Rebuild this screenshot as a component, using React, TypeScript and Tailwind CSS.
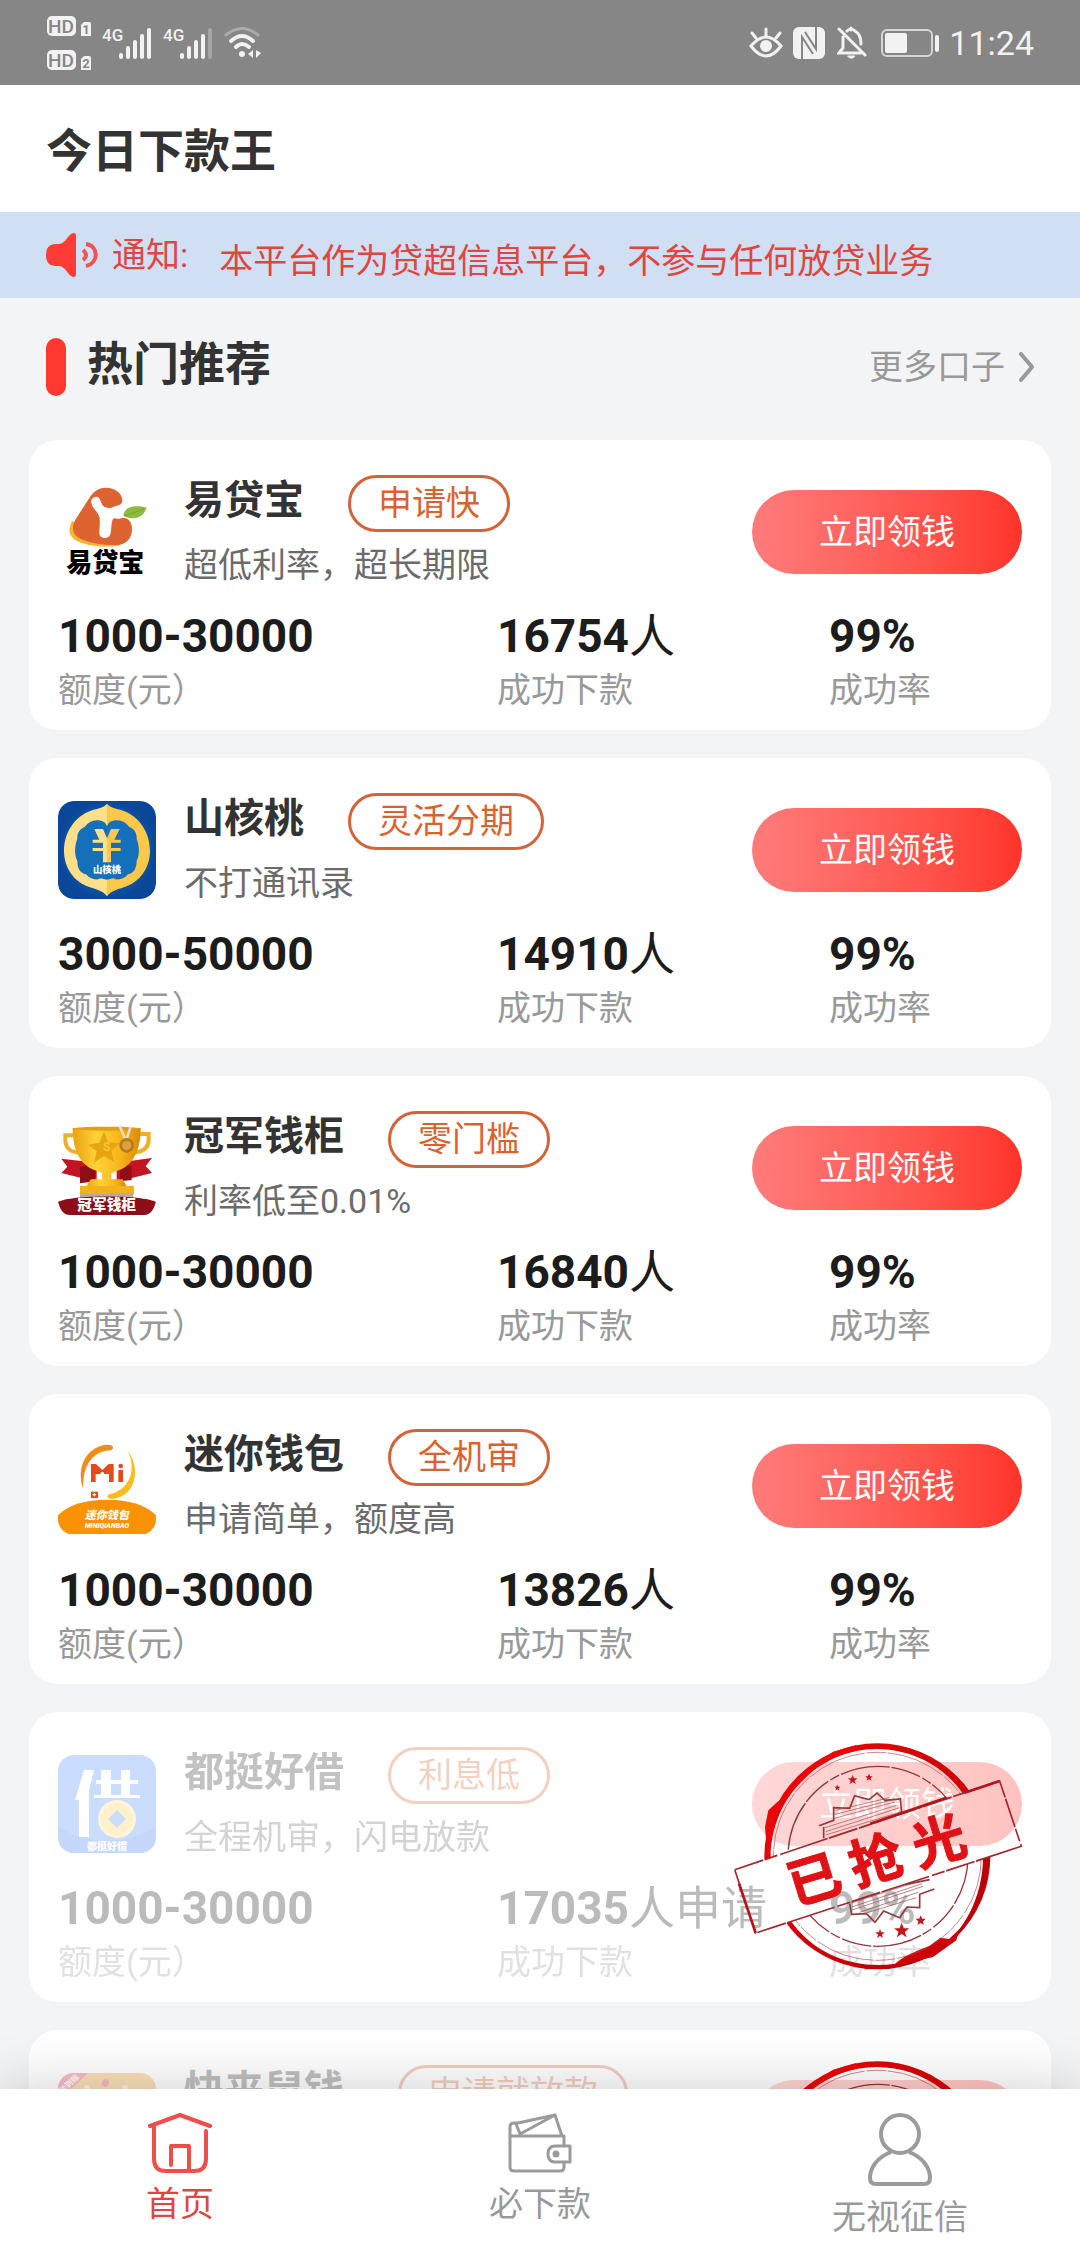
import React from 'react';
import { clsx } from 'clsx';

interface Loan {
  name: string;
  tag: string;
  desc: string;
  amount: string;
  count: string;
  unit: string;
  rate: string;
  Logo: React.FC;
  soldOut?: boolean;
}

const logoClass = 'w-[98px] h-[98px] mt-2 shrink-0 overflow-hidden rounded-2xl';

function YidaibaoLogo() {
  return (
    <svg viewBox="24 24 294 294" className={logoClass}>
      <path d="M66 138C50 170 60 192 92 203C130 214 170 218 205 212L215 200Z" fill="#f5b431" />
      <path
        d="M168 38C195 38 217 55 217 76C217 90 205 92 196 94C184 97 180 104 190 122C196 132 205 134 218 128C236 128 246 142 246 162C246 190 228 210 200 210C165 211 130 206 98 194C68 182 62 160 76 134L120 66C134 46 148 38 168 38Z"
        fill="#dd6330"
      />
      <path
        d="M124 76C128 64 144 62 149 72C155 84 156 93 166 97C185 103 196 92 219 86L221 126C204 134 190 125 187 136C183 150 185 168 180 181C176 192 154 192 149 181C146 168 153 138 147 122C142 110 120 92 124 76Z"
        fill="#fff"
      />
      <path d="M220 123C222 96 250 88 290 98C280 128 252 138 220 123Z" fill="#8dbb3f" />
      <path d="M222 122Q250 115 282 101" stroke="#6f9c2c" strokeWidth="2" fill="none" />
      <text x="166" y="292" textAnchor="middle" fontSize="78" fontWeight="900" fill="#000">
        易贷宝
      </text>
    </svg>
  );
}

function ShanhetaoLogo() {
  return (
    <svg viewBox="54 60 294 294" className={logoClass}>
      <defs>
        <radialGradient id="sht-bg">
          <stop offset="0" stopColor="#1a86d2" />
          <stop offset="1" stopColor="#0a4799" />
        </radialGradient>
      </defs>
      <rect x="54" y="60" width="294" height="294" rx="46" fill="url(#sht-bg)" />
      <path d="M201 68C188 84 166 82 145 92C100 112 72 158 72 210C72 262 104 304 148 318C172 326 190 330 201 346Z" fill="#ffe08a" />
      <path d="M201 68C214 84 236 82 257 92C302 112 330 158 330 210C330 262 298 304 254 318C230 326 212 330 201 346Z" fill="#fbc84a" />
      <path
        d="M201 136C196 122 184 118 172 118C154 118 142 128 134 138C120 142 110 158 112 174C104 194 102 220 112 240C112 262 120 276 138 280C150 294 168 300 182 292L201 296L220 292C234 300 252 294 264 280C282 276 290 262 290 240C300 220 298 194 290 174C292 158 282 142 268 138C260 128 248 118 230 118C218 118 206 122 201 136Z"
        fill="#1470ba"
      />
      <path d="M163 144H189L201 172V244H189V210H158V201H189V185H158V176H178Z" fill="#ffe08a" />
      <path d="M239 144H213L201 172V244H213V210H242V201H213V185H242V176H223Z" fill="#fbc84a" />
      <text x="201" y="277" textAnchor="middle" fontSize="28" fontWeight="900" fill="#fff">
        山核桃
      </text>
    </svg>
  );
}

function GuanjunLogo() {
  return (
    <svg viewBox="54 57 294 294" className={logoClass}>
      <defs>
        <linearGradient id="gold" x1="0" x2="1">
          <stop offset="0" stopColor="#e9a20d" />
          <stop offset=".35" stopColor="#ffd23a" />
          <stop offset=".7" stopColor="#f6b51b" />
          <stop offset="1" stopColor="#d98a06" />
        </linearGradient>
      </defs>
      <path d="M64 176L170 188V245L64 219L82 200Z" fill="#c41424" />
      <path d="M336 174L230 188V245L336 219L317 198Z" fill="#c41424" />
      <path d="M120 200L165 190V244L120 250ZM240 190L275 200V240L240 244Z" fill="#8f0e18" />
      <path d="M104 106H76V120C76 144 92 158 122 158M298 102H326V118C326 142 312 156 280 158" fill="none" stroke="#eeb024" strokeWidth="12" />
      <path d="M98 84H302C302 150 280 198 232 212L214 220V240H186V220L170 212C120 198 98 150 98 84Z" fill="url(#gold)" />
      <ellipse cx="200" cy="86" rx="102" ry="6" fill="#dfa015" />
      <path d="M192 94L204 126L240 130L214 152L222 186L192 168L162 188L170 154L144 134L178 128Z" fill="#e8a512" />
      <text x="200" y="152" textAnchor="middle" fontSize="36" fontWeight="700" fill="#f9c933">S</text>
      <path d="M240 80L258 122L272 80" fill="none" stroke="#e9ddc4" strokeWidth="8" />
      <circle cx="260" cy="136" r="22" fill="#b77a1d" />
      <circle cx="260" cy="136" r="14" fill="#dba13b" />
      <path d="M152 238H248L262 262H138Z" fill="url(#gold)" />
      <rect x="120" y="258" width="162" height="24" fill="#f2b21c" />
      <rect x="120" y="280" width="160" height="14" fill="#b9a9a0" />
      <path d="M54 306C90 284 310 284 348 306C340 330 332 345 312 345H90C70 345 62 332 54 306Z" fill="#8e0d19" />
      <text x="200" y="331" textAnchor="middle" fontSize="44" fontWeight="900" fill="#fff">
        冠军钱柜
      </text>
    </svg>
  );
}

function MiniLogo() {
  return (
    <svg viewBox="54 51 294 294" className={logoClass}>
      <path d="M130 206C112 160 124 96 184 77C196 73 219 72 219 83C219 93 206 90 194 93C146 106 128 150 130 206Z" fill="#f08c1a" />
      <path d="M264 92C304 148 286 226 222 236C206 238 200 234 204 226C207 220 218 222 228 216C276 194 286 142 264 92Z" fill="#f8bd1c" />
      <path d="M153 186V132H168L187 150L206 132H221V186H207V162H167V186Z" fill="#e34a1f" />
      <circle cx="187" cy="160" r="5" fill="#fff" />
      <rect x="235" y="150" width="14" height="36" fill="#e34a1f" />
      <circle cx="242" cy="138" r="7" fill="#e34a1f" />
      <rect x="153" y="215" width="21" height="19" fill="#e34a1f" />
      <path d="M163 219V229M158 224H168" stroke="#fff" strokeWidth="4" />
      <path d="M54 286C84 254 136 239 201 239C266 239 318 254 348 286V310C348 330 336 342 316 342H86C66 342 54 330 54 310Z" fill="#fb9206" />
      <text x="200" y="296" textAnchor="middle" fontSize="33" fontWeight="900" fontStyle="italic" fill="#fff">
        迷你钱包
      </text>
      <text x="201" y="323" textAnchor="middle" fontSize="21" fontWeight="900" fontStyle="italic" fill="#fff">
        MINIQIANBAO
      </text>
    </svg>
  );
}

function DoutingLogo() {
  return (
    <svg viewBox="0 0 98 98" className={logoClass}>
      <rect width="98" height="98" fill="#4d8bff" />
      <path d="M0 72Q49 100 98 72V98H0Z" fill="#3f7df5" />
      <path d="M26 15H36L31 35V82H21V45H17Z" fill="#fff" />
      <path d="M43 15H53V25H63V15H72V25H80V29H72V40H82V43H36V40H43V29H38V25H43ZM53 29V40H63V29Z" fill="#fff" fillRule="evenodd" />
      <circle cx="59" cy="64" r="19" fill="#ffdf80" />
      <circle cx="59" cy="64" r="16" fill="#ffcf55" />
      <path d="M59 55L68 64L59 73L50 64Z" fill="#4d8bff" />
      <text x="49" y="95" textAnchor="middle" fontSize="10" fontWeight="900" fill="#fff">
        都挺好借
      </text>
    </svg>
  );
}

function KuailaiLogo() {
  return (
    <svg viewBox="0 0 98 98" className={logoClass}>
      <rect width="98" height="98" fill="#f59a1c" />
      <path d="M0 0H30L0 28Z" fill="#e8243c" />
      <text x="13" y="13" textAnchor="middle" fontSize="8" fontWeight="700" fill="#fff" transform="rotate(-43 13 13)">
        秒到账
      </text>
      <path d="M44 8C47 5 52 6 51 10C51 14 46 15 44 12Z" fill="#d8232a" />
      <circle cx="29" cy="15" r="3" fill="#ffd9a0" />
      <circle cx="67" cy="15" r="3" fill="#ffd9a0" />
      <circle cx="49" cy="56" r="34" fill="#ffd9a0" />
    </svg>
  );
}

const loans: Loan[] = [
  { name: '易贷宝', tag: '申请快', desc: '超低利率，超长期限', amount: '1000-30000', count: '16754', unit: '人', rate: '99%', Logo: YidaibaoLogo },
  { name: '山核桃', tag: '灵活分期', desc: '不打通讯录', amount: '3000-50000', count: '14910', unit: '人', rate: '99%', Logo: ShanhetaoLogo },
  { name: '冠军钱柜', tag: '零门槛', desc: '利率低至0.01%', amount: '1000-30000', count: '16840', unit: '人', rate: '99%', Logo: GuanjunLogo },
  { name: '迷你钱包', tag: '全机审', desc: '申请简单，额度高', amount: '1000-30000', count: '13826', unit: '人', rate: '99%', Logo: MiniLogo },
  { name: '都挺好借', tag: '利息低', desc: '全程机审，闪电放款', amount: '1000-30000', count: '17035', unit: '人申请', rate: '99%', Logo: DoutingLogo, soldOut: true },
  { name: '快来鼠钱\u00a0', tag: '申请就放款', desc: '秒到账', amount: '1000-30000', count: '15208', unit: '人申请', rate: '99%', Logo: KuailaiLogo, soldOut: true },
];

function HdBadge({ sim }: { sim: string }) {
  return (
    <svg width="46" height="22" viewBox="0 0 46 22">
      <rect x="0" y="1" width="29" height="20" rx="5" fill="#f2f2f2" />
      <text x="14" y="18" textAnchor="middle" fontSize="19" fontWeight="500" fill="#868686">HD</text>
      <path d="M34 10L37 7H42Q44 7 44 9V21H34Z" fill="#f2f2f2" />
      <text x="39" y="19" textAnchor="middle" fontSize="13" fontWeight="700" fill="#868686">{sim}</text>
    </svg>
  );
}

function Signal({ weak }: { weak?: boolean }) {
  return (
    <svg width="52" height="34" viewBox="0 0 52 34" fill="#f2f2f2">
      <text x="0" y="15" fontSize="17" fontWeight="500">4G</text>
      <rect x="17" y="27" width="4" height="6" rx="2" />
      <rect x="24" y="20" width="4" height="13" rx="2" />
      <rect x="31" y="14" width="4" height="19" rx="2" />
      <rect x="38" y="8" width="4" height="25" rx="2" />
      <rect x="45" y="2" width="4" height="31" rx="2" opacity={weak ? 0.3 : 1} />
    </svg>
  );
}

function StatusBar() {
  return (
    <div className="flex h-[85px] shrink-0 items-center justify-between bg-[#868686] pr-[46px] pl-[47px] text-[#f2f2f2]">
      <div className="flex items-center">
        <div className="flex flex-col gap-3">
          <HdBadge sim="1" />
          <HdBadge sim="2" />
        </div>
        <div className="flex gap-[9px] pl-[9px]">
          <Signal />
          <Signal weak />
          <svg width="38" height="34" viewBox="0 0 38 34" fill="none" stroke="#f2f2f2" strokeWidth="3" strokeLinecap="round">
            <path d="M2 9Q18 -4 34 9" opacity=".35" />
            <path d="M7 15Q18 5 29 15" strokeWidth="4" />
            <path d="M12 21Q18 15 25 21" strokeWidth="4" />
            <circle cx="18" cy="28" r="3" fill="#f2f2f2" stroke="none" />
            <path d="M29 24V32L24 28ZM32 24V32L37 27Z" fill="#f2f2f2" stroke="none" />
          </svg>
        </div>
      </div>
      <div className="flex items-center">
        <svg width="34" height="34" viewBox="0 0 34 34" fill="none" stroke="#f2f2f2" strokeWidth="3" strokeLinecap="round">
          <path d="M2 20Q17 2 32 20Q17 40 2 20Z" />
          <circle cx="17" cy="20" r="6" fill="#f2f2f2" stroke="none" />
          <path d="M17 3V10M3 7L7 12M31 7L27 12" />
        </svg>
        <svg width="32" height="34" viewBox="0 0 32 34" className="ml-[10px]">
          <rect x="0" y="1" width="32" height="32" rx="6" fill="#f2f2f2" />
          <path d="M9 34V11L20 28M23 0V23L12 6" fill="none" stroke="#868686" strokeWidth="2" />
        </svg>
        <svg width="30" height="34" viewBox="0 0 30 34" className="ml-3" fill="none" stroke="#f2f2f2" strokeWidth="3" strokeLinecap="round">
          <path d="M6 11V22L2 27H24M10 5Q14 1 18 5Q24 8 24 18M14 2V4M2 3L28 29" />
          <path d="M11 30H18L16 32H13Z" fill="#f2f2f2" strokeWidth="1" />
        </svg>
        <svg width="58" height="30" viewBox="0 0 58 30" className="ml-[14px]">
          <rect x="1" y="2" width="50" height="26" rx="5" fill="none" stroke="#d5d5d5" strokeWidth="2" />
          <rect x="4" y="5" width="22" height="20" rx="2" fill="#f2f2f2" />
          <rect x="54" y="7" width="4" height="17" rx="2" fill="#f2f2f2" />
        </svg>
        <span className="ml-[10px] text-[34px] leading-[48px]">11:24</span>
      </div>
    </div>
  );
}

const star = 'M0 -14L4 -4L14 -4L6 3L9 13L0 7L-9 13L-6 3L-14 -4L-4 -4Z';

function SoldOutStamp() {
  return (
    <svg viewBox="100 95 870 690" className="absolute top-[30px] right-[28px] h-[230px] w-[290px]">
      <defs>
        <clipPath id="stamp-halves">
          <path d="M0 0H1100V145L0 513ZM0 723L1100 364V900H0Z" />
        </clipPath>
        <linearGradient id="stamp-red" x1="0" y1="0" x2="1" y2="1">
          <stop offset="0" stopColor="#f00505" />
          <stop offset="1" stopColor="#b00008" />
        </linearGradient>
      </defs>
      <g clipPath="url(#stamp-halves)" fill="none">
        <path
          d="M533 99A339 339 0 0 1 872 438A339 339 0 0 1 533 777A339 339 0 0 1 194 438A339 339 0 0 1 533 99ZM530 116C360 116 214 260 213 440C214 620 350 764 535 764C600 764 660 748 705 722C790 676 850 560 850 440C850 260 710 116 530 116Z"
          fill="url(#stamp-red)"
          fillRule="evenodd"
        />
        <path d="M196 440L200 400L196 350L206 300L232 276L250 262L240 295L224 330L214 400L208 440Z" fill="#e80808" />
        <path d="M262 250L330 170L400 124L470 104L472 120L404 140L340 178L276 244Z" fill="#ee0505" />
        <path d="M580 768C600 742 640 726 690 706L722 682L748 686L780 655L770 690L700 740Z" fill="url(#stamp-red)" />
        <circle cx="533" cy="438" r="312" stroke="#b6484c" strokeWidth="2" strokeDasharray="180 6 60 4" />
        <circle cx="535" cy="438" r="270" stroke="#96353a" strokeWidth="4" strokeDasharray="150 5 90 8 30 6" />
        <path
          d="M358 346L402 330V292L450 294L465 256L508 268L532 248L556 270L602 266L606 306M372 384V350M450 580L456 612L500 610L526 636L552 602L600 622L622 590L660 592V552L704 536M620 522L690 508"
          stroke="#8e3a3f"
          strokeWidth="5"
        />
        <path
          d="M376 352L590 285M378 364L600 292M378 374L604 304M400 325L585 275M406 312L580 268M408 300L570 262M454 600L670 528M456 590L668 520M480 606L655 546M500 608L650 562M455 578L650 515"
          stroke="#a0484d"
          strokeWidth="2"
        />
      </g>
      <path d="M105 478L900 212L965 408L168 668Z" fill="none" stroke="#a5262c" strokeWidth="5" strokeDasharray="90 5 40 9 150 4" />
      <path d="M795 247L900 212M118 520L168 668M512 340L740 262" stroke="#b5141b" strokeWidth="8" />
      <g fill="#c4161c">
        <path d={star} transform="translate(413 232) scale(.7)" />
        <path d={star} transform="translate(459 208)" />
        <path d={star} transform="translate(508 201) scale(.8)" />
        <path d={star} transform="translate(541 670)" />
        <path d={star} transform="translate(606 660) scale(1.6)" />
        <path d={star} transform="translate(663 630) scale(1.1)" />
      </g>
      <text
        x="334 528 726"
        y="508"
        textAnchor="middle"
        fontSize="160"
        fontWeight="700"
        fill="#e01216"
        stroke="#e01216"
        strokeWidth="3"
        transform="rotate(-17 528 448)"
      >
        已抢光
      </text>
    </svg>
  );
}

function Stat({ value, unit, label }: { value: string; unit?: string; label: string }) {
  return (
    <div className="whitespace-nowrap">
      <p className="text-[46px] leading-[56px] text-[#1c1c1c]">
        <b>{value}</b>
        {unit}
      </p>
      <p className="text-[34px] leading-[52px] text-[#999]">{label}</p>
    </div>
  );
}

function LoanCard({ loan }: { loan: Loan }) {
  const { Logo } = loan;
  return (
    <li className="relative rounded-[28px] bg-white px-[29px] pt-[35px] pb-[14px]">
      <div className={clsx(loan.soldOut && 'opacity-30')}>
        <div className="flex items-start">
          <Logo />
          <div className="ml-7 flex-1">
            <div className="flex items-start gap-[44px]">
              <h3 className="text-[40px] leading-[52px] font-bold text-[#333]">{loan.name}</h3>
              <span className="rounded-full border-3 border-[#d3643a] px-[27px] text-[34px] leading-[51px] text-[#d9632f]">
                {loan.tag}
              </span>
            </div>
            <p className="mt-[9px] text-[34px] leading-[48px] text-[#6b6b6b]">{loan.desc}</p>
          </div>
          <button
            type="button"
            className="mt-[15px] h-[84px] w-[270px] shrink-0 rounded-full bg-linear-to-r from-[#ff7b7b] to-[#ff3329] text-[34px] leading-[48px] text-white"
          >
            立即领钱
          </button>
        </div>
        <div className="mt-[19px] grid grid-cols-[439fr_332fr_193fr]">
          <Stat value={loan.amount} label="额度(元）" />
          <Stat value={loan.count} unit={loan.unit} label="成功下款" />
          <Stat value={loan.rate} label="成功率" />
        </div>
      </div>
      {loan.soldOut && <SoldOutStamp />}
    </li>
  );
}

function TabBar() {
  return (
    <nav className="relative z-10 grid h-[155px] shrink-0 grid-cols-3 bg-white pt-6 text-[34px] leading-[48px] text-[#999] shadow-[0_0_60px_rgba(0,0,0,0.2)]">
      <a href="#home" className="flex flex-col items-center gap-[7px] text-[#e0453f]">
        <svg width="64" height="60" viewBox="0 0 64 60" fill="none" stroke="#ef4f4b" strokeWidth="4" strokeLinecap="round" strokeLinejoin="round">
          <path d="M2 13L32 2L62 13M6 14V46Q6 58 18 58H46Q58 58 58 46V18M23 52V33H41V57" />
        </svg>
        首页
      </a>
      <a href="#loans" className="flex flex-col items-center gap-[7px]">
        <svg width="64" height="60" viewBox="0 0 64 60" fill="none" stroke="#9b9b9b" strokeWidth="3" strokeLinejoin="round">
          <path d="M56 32V23H2V54Q2 58 6 58H52Q56 58 56 54V50M2 23V14Q2 10 6 10H10L47 2L54 23M8 11L13 23M12 21L47 2" />
          <path d="M62 33H47Q40 33 40 41Q40 49 47 49H62Z" />
          <circle cx="48" cy="41" r="2" fill="#9b9b9b" />
        </svg>
        必下款
      </a>
      <a href="#credit" className="flex flex-col items-center gap-[7px]">
        <svg width="64" height="73" viewBox="0 0 64 73" fill="none" stroke="#9b9b9b" strokeWidth="4" strokeLinejoin="round">
          <circle cx="32" cy="21" r="19" />
          <path d="M23 39C10 44 2 54 2 65Q2 71 8 71H56Q62 71 62 65C62 54 54 44 41 39" />
        </svg>
        无视征信
      </a>
    </nav>
  );
}

export default function App() {
  return (
    <div className="flex h-screen flex-col bg-[#f3f4f6] font-[Roboto,'Noto_Sans_CJK_SC',sans-serif]" lang="zh-CN">
      <StatusBar />
      <header className="flex h-[127px] shrink-0 items-center bg-white px-[46px] pt-1">
        <h1 className="text-[46px] leading-[56px] font-bold text-[#333]">今日下款王</h1>
      </header>

      <div className="flex h-[86px] shrink-0 items-center bg-[#d0dff4] px-[46px] text-[34px] leading-[48px] whitespace-nowrap text-[#e0453f]">
        <svg width="52" height="44" viewBox="0 0 52 44">
          <path d="M10 11H13C20 11 22 0 28 0Q30 0 30 3V41Q30 44 28 44C22 44 20 33 13 33H10Q0 33 0 22Q0 11 10 11Z" fill="#ff3b35" />
          <path d="M37 17Q43 22 37 27M40 11C53 13 53 30 40 33" fill="none" stroke="#f25252" strokeWidth="4" />
        </svg>
        <span className="ml-[14px]">通知:</span>
        <p className="ml-[31px] pt-3">本平台作为贷超信息平台，不参与任何放贷业务</p>
      </div>

      <main className="min-h-0 flex-1 overflow-y-auto px-[29px] [scrollbar-width:none]">
        <div className="mt-[40px] mb-[44px] flex h-[58px] items-center pr-4 pl-[17px]">
          <span className="h-[58px] w-5 rounded-full bg-[#ff3830]" />
          <h2 className="ml-[21px] self-start text-[46px] leading-[52px] font-bold text-[#333]">热门推荐</h2>
          <a href="#more" className="ml-auto flex items-center gap-[14px] text-[34px] leading-[48px] text-[#999]">
            更多口子
            <svg width="16" height="30" viewBox="0 0 16 30" fill="none" stroke="#999" strokeWidth="4" strokeLinecap="round" strokeLinejoin="round">
              <path d="M2 2L13 15L2 28" />
            </svg>
          </a>
        </div>
        <ul className="flex flex-col gap-7">
          {loans.map((loan) => (
            <LoanCard key={loan.name} loan={loan} />
          ))}
        </ul>
      </main>

      <TabBar />
    </div>
  );
}
